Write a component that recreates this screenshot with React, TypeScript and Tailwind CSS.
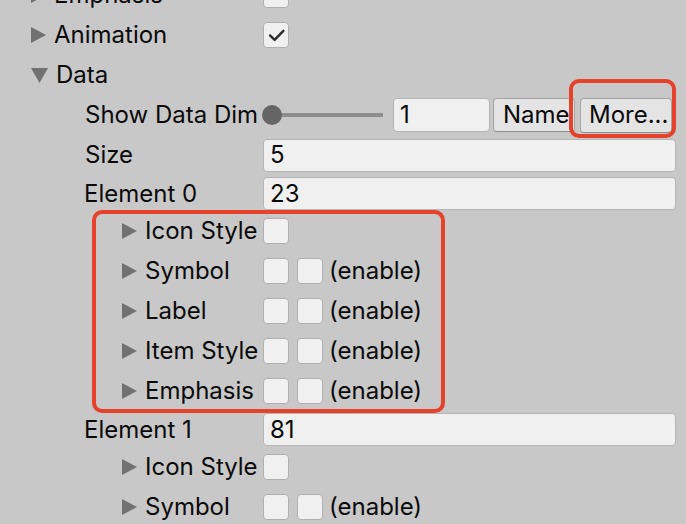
import type { ReactNode } from "react";

const Arrow = ({ open = false }: { open?: boolean }) =>
  open ? (
    <svg width="17" height="16" viewBox="0 0 17 16" className="shrink-0">
      <path d="M0 1h17L8.5 16z" fill="#717171" />
    </svg>
  ) : (
    <svg width="15" height="16" viewBox="0 0 15 16" className="shrink-0">
      <path d="M0 0v16l15-8z" fill="#717171" />
    </svg>
  );

const Toggle = ({ checked = false }: { checked?: boolean }) => (
  <div className="flex h-[26px] w-[26px] shrink-0 items-center justify-center rounded-[4px] border-[1.5px] border-[#b0b0b0] bg-[#f0f0f0]">
    {checked && (
      <svg width="26" height="26" viewBox="0 0 26 26">
        <path
          d="M6.5 13.5l5 4.8L21 8.5"
          fill="none"
          stroke="#2e2e2e"
          strokeWidth="2.6"
          strokeLinecap="round"
          strokeLinejoin="round"
        />
      </svg>
    )}
  </div>
);

const Field = ({ value }: { value: string }) => (
  <div className="flex h-[33px] flex-1 items-center rounded-[4px] border-[1.5px] border-[#b5b5b5] bg-[#f0f0f0] pl-[6px]">
    {value}
  </div>
);

// foldout label at nesting level 0 (triangle at x 32) or 2 (triangle at x 122)
const Foldout = ({
  label,
  open,
  deep,
}: {
  label: string;
  open?: boolean;
  deep?: boolean;
}) => (
  <div
    className={
      deep
        ? "flex w-[263px] shrink-0 items-center gap-[8px] pl-[122px]"
        : "flex w-[263px] shrink-0 items-center gap-[8px] pl-[31px]"
    }
  >
    <Arrow open={open} />
    <span className="whitespace-nowrap">{label}</span>
  </div>
);

const Row = ({ children }: { children: ReactNode }) => (
  <div className="flex h-[40px] items-center pr-[10px]">{children}</div>
);

const Enable = () => (
  <>
    <Toggle />
    <div className="ml-[8px]">
      <Toggle />
    </div>
    <span className="ml-[6px]">(enable)</span>
  </>
);

const ElementBlock = ({ name, value }: { name: string; value: string }) => (
  <div className="flex h-[36px] items-start pr-[10px] pt-[2px]">
    <div className="flex h-[33px] w-[263px] shrink-0 items-center pl-[84px]">
      {name}
    </div>
    <Field value={value} />
  </div>
);

export default function App() {
  return (
    <div className="h-[524px] w-[686px] overflow-hidden bg-[#c8c8c8] font-['Inter','Liberation_Sans',sans-serif] text-[24px] leading-none text-[#0a0a0a]">
      <div className="-mt-[25px]">
        <Row>
          <Foldout label="Emphasis" />
          <Toggle />
        </Row>
        <Row>
          <Foldout label="Animation" />
          <Toggle checked />
        </Row>
        <Row>
          <Foldout label="Data" open />
        </Row>
        <Row>
          <div className="w-[263px] shrink-0 overflow-hidden whitespace-nowrap pl-[85px]">
            Show Data Dim
          </div>
          <div className="relative flex h-[20px] w-[120px] shrink-0 items-center">
            <div className="ml-[10px] h-[4px] flex-1 bg-[#8d8d8d]" />
            <div className="absolute -left-[1px] top-0 h-[20px] w-[20px] rounded-full bg-[#656565]" />
          </div>
          <div className="ml-[10px] flex h-[34px] w-[97px] shrink-0 items-center rounded-[4px] border-[1.5px] border-[#b5b5b5] bg-[#f0f0f0] pl-[6px]">
            1
          </div>
          <div className="ml-[3px] flex h-[34px] w-[82px] shrink-0 items-center overflow-hidden whitespace-nowrap rounded-[4px] border-[1.5px] border-[#a5a5a5] border-b-[#8e8e8e] bg-[#e4e4e4] pl-[9px]">
            Name
          </div>
          <div className="relative ml-[5px] flex h-[35px] w-[92px] shrink-0 items-center rounded-[4px] border-[1.5px] border-[#a5a5a5] border-b-[#8e8e8e] bg-[#e4e4e4] pl-[8px]">
            More...
            <div className="pointer-events-none absolute -bottom-[6px] -left-[12px] -right-[5px] -top-[20px] rounded-[10px] border-4 border-[#e6412b]" />
          </div>
        </Row>
        <Row>
          <div className="w-[263px] shrink-0 pl-[85px]">Size</div>
          <Field value="5" />
        </Row>
        <ElementBlock name="Element 0" value="23" />
        <div className="relative">
          <Row>
            <Foldout label="Icon Style" deep />
            <Toggle />
          </Row>
          <Row>
            <Foldout label="Symbol" deep />
            <Enable />
          </Row>
          <Row>
            <Foldout label="Label" deep />
            <Enable />
          </Row>
          <Row>
            <Foldout label="Item Style" deep />
            <Enable />
          </Row>
          <Row>
            <Foldout label="Emphasis" deep />
            <Enable />
          </Row>
          <div className="pointer-events-none absolute -bottom-[2px] -top-[1px] left-[92px] w-[353px] rounded-[10px] border-4 border-[#e6412b]" />
        </div>
        <ElementBlock name="Element 1" value="81" />
        <Row>
          <Foldout label="Icon Style" deep />
          <Toggle />
        </Row>
        <Row>
          <Foldout label="Symbol" deep />
          <Enable />
        </Row>
      </div>
    </div>
  );
}
